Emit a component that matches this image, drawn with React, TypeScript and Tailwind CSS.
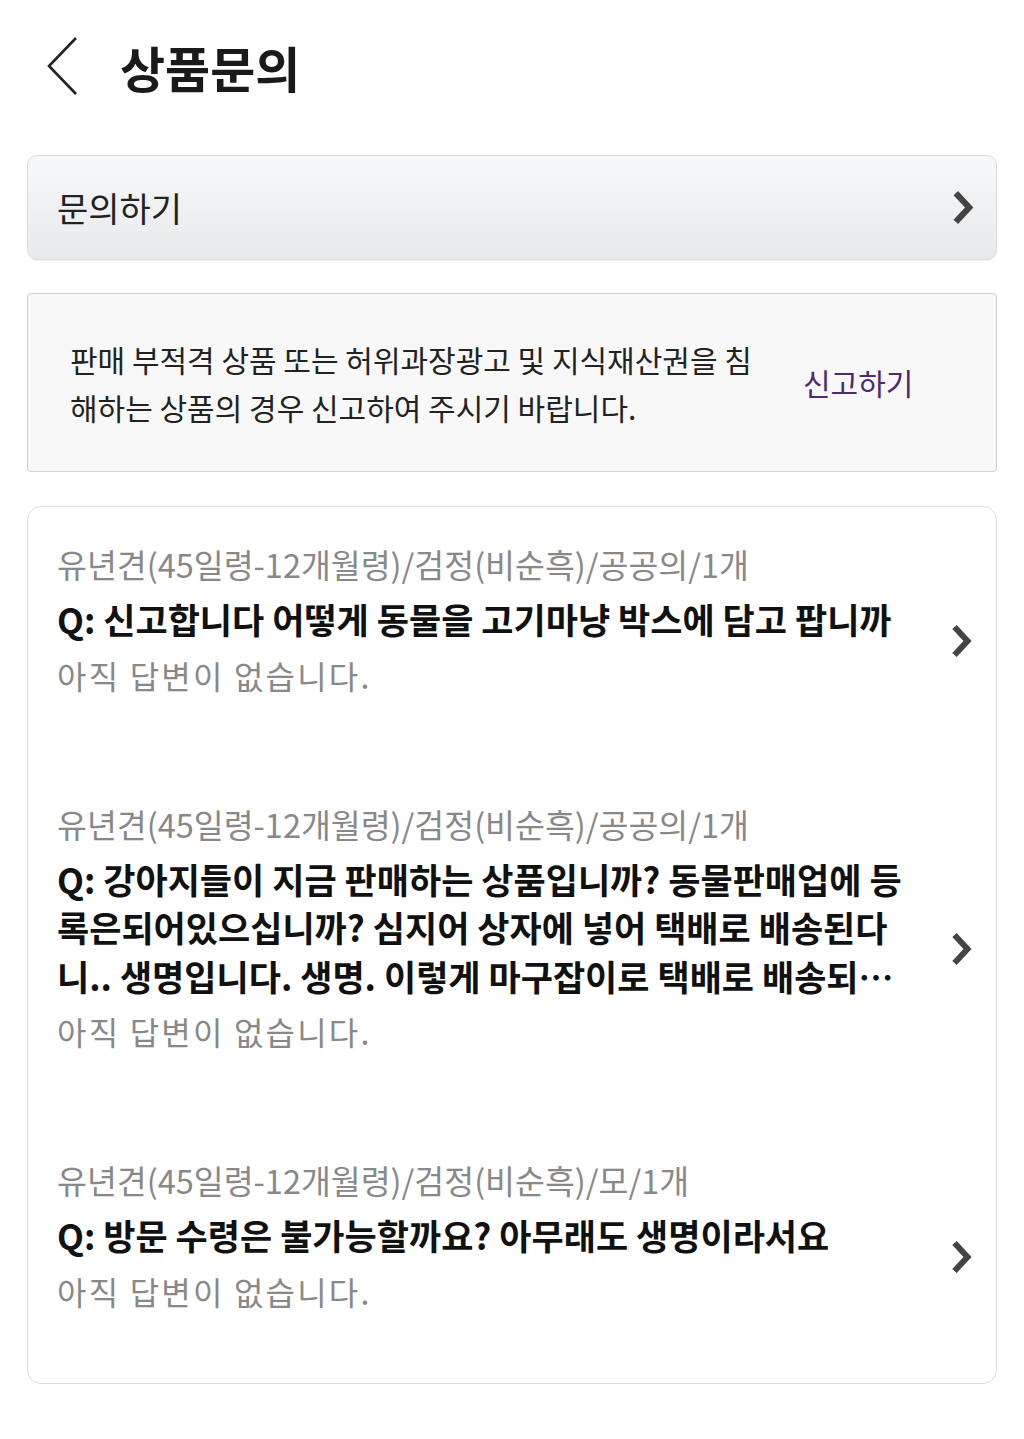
import React from "react";

const font = {
  fontFamily: '"Noto Sans CJK KR", "Noto Sans", sans-serif',
};

const items = [
  {
    option: "유년견(45일령-12개월령)/검정(비순흑)/공공의/1개",
    question: "Q: 신고합니다 어떻게 동물을 고기마냥 박스에 담고 팝니까",
  },
  {
    option: "유년견(45일령-12개월령)/검정(비순흑)/공공의/1개",
    question:
      "Q: 강아지들이 지금 판매하는 상품입니까? 동물판매업에 등록은되어있으십니까? 심지어 상자에 넣어 택배로 배송된다니.. 생명입니다. 생명. 이렇게 마구잡이로 택배로 배송되는건 말이 안됩니다.",
  },
  {
    option: "유년견(45일령-12개월령)/검정(비순흑)/모/1개",
    question: "Q: 방문 수령은 불가능할까요? 아무래도 생명이라서요",
  },
];

function Chevron({ className }: { className?: string }) {
  return (
    <svg viewBox="0 0 24 36" className={className} fill="none">
      <path
        d="M5 4 L18 18 L5 32"
        stroke="#444"
        strokeWidth="6"
        strokeLinejoin="miter"
      />
    </svg>
  );
}

export default function App() {
  return (
    <div className="w-[1024px] min-h-[1439px] bg-white" style={font}>
      {/* Header */}
      <header className="h-[132px] flex items-center pl-[46px]">
        <svg viewBox="0 0 32 58" className="w-[32px] h-[58px]" fill="none">
          <path d="M30 1 L3 29 L30 57" stroke="#222" strokeWidth="2.6" />
        </svg>
        <h1 className="ml-[42px] text-[49px] font-bold text-[#1a1a1a] leading-none">
          상품문의
        </h1>
      </header>

      <div className="px-[27px] mt-[23px]">
        {/* Ask button */}
        <button className="w-full h-[105px] rounded-[10px] border border-[#dcdcdc] bg-gradient-to-b from-[#f7f8f9] to-[#e8e9eb] flex items-center justify-between pl-[29px] pr-[20px] shadow-[0_1px_1px_rgba(0,0,0,0.06)]">
          <span className="text-[34px] text-[#222] leading-none">문의하기</span>
          <Chevron className="w-[26px] h-[37px]" />
        </button>

        {/* Notice */}
        <div className="mt-[33px] h-[179px] rounded-[4px] border border-[#cfcfcf] bg-[#f8f8f8] flex items-center pl-[42px]">
          <p className="w-[704px] text-[30px] leading-[48px] text-[#222]">
            판매 부적격 상품 또는 허위과장광고 및 지식재산권을 침해하는
            상품의 경우 신고하여 주시기 바랍니다.
          </p>
          <span className="ml-[29px] text-[30px] text-[#4e2a6e]">신고하기</span>
        </div>

        {/* Inquiry list */}
        <div className="mt-[34px] rounded-[14px] border border-[#dddddd] bg-white">
          {items.map((item, i) => (
            <div
              key={i}
              className="flex items-center pl-[29px] pr-[22px] pt-[33px] pb-[68px]"
            >
              <div className="w-[860px] flex flex-col">
                <p className="text-[32.5px] leading-[48px] text-[#888]">
                  {item.option}
                </p>
                <p className="mt-[5px] py-[2px] text-[35px] leading-[48.5px] font-bold text-[#111] line-clamp-3">
                  {item.question}
                </p>
                <p className="mt-[5px] text-[32px] leading-[48px] tracking-[2.2px] text-[#888]">
                  아직 답변이 없습니다.
                </p>
              </div>
              <Chevron className="ml-auto mt-[44px] w-[25px] h-[36px]" />
            </div>
          ))}
        </div>
      </div>
    </div>
  );
}
